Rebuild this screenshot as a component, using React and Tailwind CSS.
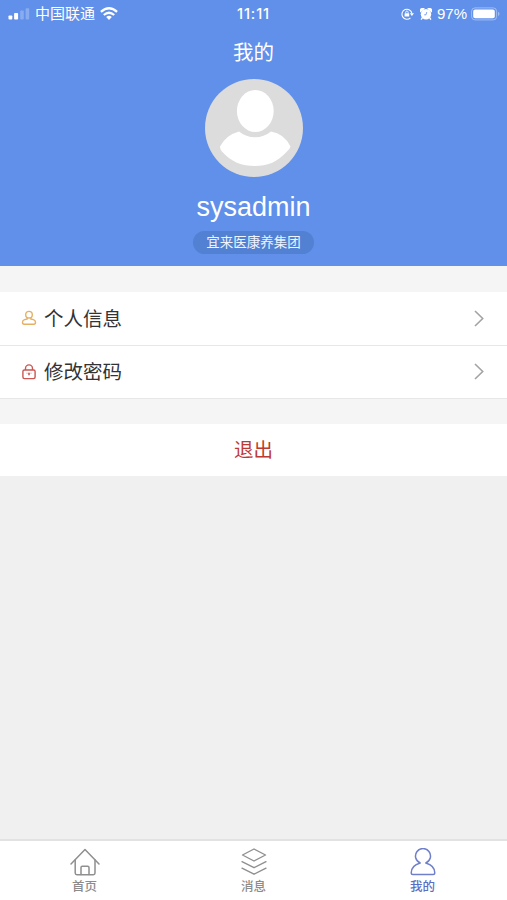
function SignalIcon() {
  return (
    <svg width="22" height="12" viewBox="0 0 22 12" fill="#fff">
      <rect x="0.5" y="7.5" width="3.8" height="4" rx="0.8" />
      <rect x="6.1" y="5" width="4" height="6.5" rx="0.8" />
      <rect x="12.2" y="2.6" width="3.6" height="8.9" rx="0.8" opacity="0.25" />
      <rect x="17.6" y="0.2" width="3.6" height="11.3" rx="0.8" opacity="0.25" />
    </svg>
  );
}

function WifiIcon() {
  return (
    <svg width="18" height="13" viewBox="0 0 18 13" fill="none" stroke="#fff" strokeWidth="2.3">
      <path d="M0.9 4.9 Q9 -2.3 17.1 4.9" />
      <path d="M3.8 8 Q9 3.4 14.2 8" />
      <path d="M6.2 9.9 Q9 7.6 11.8 9.9 L9 12.9 Z" fill="#fff" stroke="none" />
    </svg>
  );
}

function RotationLockIcon() {
  return (
    <svg width="13" height="12" viewBox="0 0 13 12" fill="none" stroke="#fff" strokeWidth="1.1">
      <path d="M9.4 9.9 A5 5 0 1 1 10.9 5.4" />
      <path d="M8.8 5.2 H13 L10.9 8 Z" fill="#fff" stroke="none" />
      <rect x="3.6" y="5.2" width="4.6" height="3.4" rx="0.4" fill="#fff" stroke="none" />
      <path d="M4.7 5.4 V4.2 A1.2 1.2 0 0 1 7.1 4.2 V5.4" strokeWidth="0.9" />
    </svg>
  );
}

function AlarmIcon() {
  return (
    <svg width="12" height="12" viewBox="0 0 12 12" fill="#fff">
      <circle cx="6" cy="6.3" r="5.2" />
      <path d="M0.4 4.6 A2.4 2.4 0 0 1 4.8 0.8 Z" />
      <path d="M11.6 4.6 A2.4 2.4 0 0 0 7.2 0.8 Z" />
      <path d="M2.4 9.6 L1.4 11.2 M9.6 9.6 L10.6 11.2" stroke="#fff" strokeWidth="1.4" strokeLinecap="round" />
      <path d="M6.8 4 L6 6.8 H4.2" fill="none" stroke="#6090ea" strokeWidth="0.8" />
    </svg>
  );
}

function BatteryIcon() {
  return (
    <svg width="29" height="14" viewBox="0 0 29 14">
      <rect x="0.6" y="0.9" width="25" height="12" rx="3.4" fill="none" stroke="#fff" strokeOpacity="0.4" strokeWidth="1" />
      <rect x="2.2" y="2.5" width="21.6" height="8.8" rx="2" fill="#fff" />
      <path d="M27 4.8 Q28.5 5.4 28.5 6.9 Q28.5 8.4 27 9 Z" fill="#fff" fillOpacity="0.4" />
    </svg>
  );
}

function StatusBar() {
  return (
    <div className="relative flex h-[27px] items-center justify-between pl-2 pr-[7px] text-white">
      <div className="flex items-center">
        <SignalIcon />
        <span className="ml-[5px] mr-[5px] pb-[2px] text-[15px] leading-none">中国联通</span>
        <WifiIcon />
      </div>
      <div className="absolute inset-x-0 text-center font-['Inter'] text-[14.5px] font-medium tracking-[0.9px]">11:11</div>
      <div className="flex items-center">
        <RotationLockIcon />
        <span className="ml-[6px]">
          <AlarmIcon />
        </span>
        <span className="ml-[5px] w-[31px] font-['Liberation_Sans'] text-[15px] leading-none whitespace-nowrap">97%</span>
        <span className="ml-[3px]">
          <BatteryIcon />
        </span>
      </div>
    </div>
  );
}

function Avatar() {
  return (
    <svg className="mt-[13px]" width="98" height="98" viewBox="0 0 98 98">
      <circle cx="49" cy="49" r="49" fill="#dcdcdc" />
      <ellipse cx="50.3" cy="32" rx="18.4" ry="21" fill="#fff" />
      <path
        d="M34 52.5 Q41 58.3 50 58.3 Q59 58.3 66 52.5 Q79 54.5 85.5 67.5 Q85 70 81.5 73 C72 83.5 62 87 50 87 C37 87 26 83 16.5 72 Q15 70 15 67.5 Q21 56 34 52.5 Z"
        fill="#fff"
      />
    </svg>
  );
}

function ProfileIcon() {
  return (
    <svg width="16" height="16" viewBox="0 0 16 16" fill="none" stroke="#e5b064" strokeWidth="1.4" strokeLinejoin="round">
      <circle cx="8" cy="4.7" r="3.3" />
      <path d="M6.2 7.8 V9 L3.6 9.6 Q1.5 10.2 1.5 12.2 Q1.5 14.2 3.1 14.2 H12.9 Q14.5 14.2 14.5 12.2 Q14.5 10.2 12.4 9.6 L9.8 9 V7.8" />
    </svg>
  );
}

function LockIcon() {
  return (
    <svg width="16" height="16" viewBox="0 0 16 16" fill="none" stroke="#c95754" strokeWidth="1.4">
      <rect x="1.9" y="6" width="12.2" height="8.6" rx="1.5" />
      <path d="M4.5 6 V4.4 A3.5 3.5 0 0 1 11.5 4.4 V6" />
      <path d="M8 8.8 V11.2" strokeWidth="1.6" />
      <path d="M5 9.2 H11" strokeWidth="0.7" strokeOpacity="0.5" />
    </svg>
  );
}

function Chevron() {
  return (
    <svg width="10" height="17" viewBox="0 0 10 17" fill="none" stroke="#a3a3a3" strokeWidth="1.6">
      <path d="M1 1 L8.7 8.5 L1 16" />
    </svg>
  );
}

function HomeIcon() {
  return (
    <svg width="30" height="28" viewBox="0 0 30 28" fill="none" stroke="#8f8f8f" strokeWidth="1.5" strokeLinecap="round" strokeLinejoin="round">
      <path d="M1 16 L15 1.5 L29 16" />
      <path d="M5.2 12 V25 Q5.2 26.7 6.9 26.7 H23.3 Q25 26.7 25 25 V12" />
      <path d="M11 26.5 V19.5 Q11 18.2 12.3 18.2 H17.7 Q19 18.2 19 19.5 V26.5" />
    </svg>
  );
}

function LayersIcon() {
  return (
    <svg width="26" height="28" viewBox="0 0 26 28" fill="none" stroke="#8f8f8f" strokeWidth="1.4" strokeLinecap="round" strokeLinejoin="round">
      <path d="M13 1 L24.5 7 L13 13 L1.5 7 Z" />
      <path d="M1 13.7 L13 19.7 L25 13.7" />
      <path d="M1 20.2 L13 26.2 L25 20.2" />
    </svg>
  );
}

function UserIcon() {
  return (
    <svg width="26" height="28" viewBox="0 0 26 28" fill="none" stroke="#6f7fca" strokeWidth="1.5" strokeLinejoin="round">
      <path d="M10.2 15 A7.5 7.5 0 1 1 15.8 15 Q24.8 17.5 24.8 25 Q24.8 26.5 23.2 26.5 H2.8 Q1.2 26.5 1.2 25 Q1.2 17.5 10.2 15 Z" />
    </svg>
  );
}

const rows = [
  { label: '个人信息', icon: <ProfileIcon /> },
  { label: '修改密码', icon: <LockIcon /> },
];

const tabs = [
  { label: '首页', icon: <HomeIcon />, color: 'text-[#8c8c8c]' },
  { label: '消息', icon: <LayersIcon />, color: 'text-[#8c8c8c]' },
  { label: '我的', icon: <UserIcon />, color: 'text-[#5b6fc6]' },
];

export default function App() {
  return (
    <div className="flex h-screen flex-col bg-[#f0f0f0] font-['Noto_Sans_CJK_SC',sans-serif]">
      <header className="h-[266px] shrink-0 bg-[#6090ea] text-white">
        <StatusBar />
        <div className="flex flex-col items-center">
          <h1 className="mt-[10px] text-[20.5px] leading-[29px]">我的</h1>
          <Avatar />
          <div className="mt-[14px] font-['Liberation_Sans'] text-[27px] leading-[32px]">sysadmin</div>
          <div className="mt-[8px] h-[23px] w-[121px] rounded-full bg-[#5280d3] text-center text-[13.5px] leading-[20px] text-[#edf3ff]">
            宜来医康养集团
          </div>
        </div>
      </header>

      <main className="flex-1">
        <div className="bg-[#f5f5f5] pt-[26px] pb-[25px]">
          {rows.map((row) => (
            <div
              key={row.label}
              className="flex h-[53.5px] items-center border-b border-[#e7e7e7] bg-white pl-[21px] pr-[23px]"
            >
              {row.icon}
              <span className="ml-[7px] flex-1 pb-[2px] text-[19.5px] text-[#333]">{row.label}</span>
              <Chevron />
            </div>
          ))}
        </div>
        <button className="block h-[52px] w-full bg-white pb-[2px] text-center text-[19.5px] text-[#bd3a32]">退出</button>
      </main>

      <nav className="grid h-[61px] grid-cols-3 border-t-2 border-[#e2e2e2] bg-white">
        {tabs.map((tab) => (
          <div key={tab.label} className={`flex flex-col items-center pt-[7px] ${tab.color}`}>
            {tab.icon}
            <span className="mt-[2px] text-[12.5px] leading-[16px] font-medium">{tab.label}</span>
          </div>
        ))}
      </nav>
    </div>
  );
}
